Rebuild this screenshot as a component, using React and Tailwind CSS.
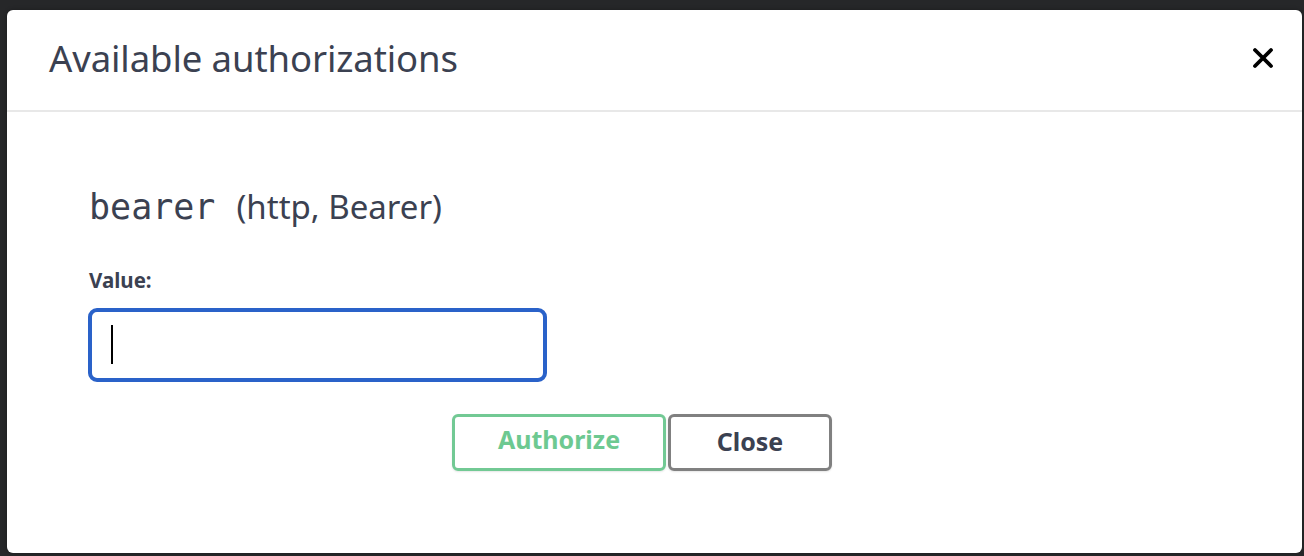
import React from "react";

export default function App() {
  return (
    <div className="w-[1304px] h-[556px] bg-[#262729] pl-[7px] pr-[2px] pt-[10px] pb-[3px] overflow-hidden" style={{ fontFamily: '"Noto Sans", "Open Sans", sans-serif' }}>
      <div className="h-full bg-white rounded-[6px] shadow-[0_0_4px_rgba(0,0,0,0.3)] flex flex-col">
        <div className="h-[102px] border-b-2 border-[#e8e8e8] flex items-center justify-between pl-[42px] pr-[27px] shrink-0">
          <h3 className="text-[36.5px] leading-none text-[#3b4151] font-normal tracking-[-0.1px] mt-[-4px]">Available authorizations</h3>
          <button className="w-[24px] h-[24px] flex items-center justify-center mt-[-4px]">
            <svg width="22" height="22" viewBox="0 0 22 22">
              <path d="M3 3 L19 19 M19 3 L3 19" stroke="#000" strokeWidth="3.8" strokeLinecap="round" />
            </svg>
          </button>
        </div>
        <div className="pl-[81px] pt-[78px]">
          <h4 className="flex items-baseline text-[#3b4151] leading-none pl-[1px]">
            <code className="text-[35px]" style={{ fontFamily: '"DejaVu Sans Mono", monospace' }}>bearer</code>
            <span className="text-[33px] ml-[21px]">(http, Bearer)</span>
          </h4>
          <div className="mt-[45px] pl-[1px] text-[20.5px] font-bold text-[#3b4151] leading-none">Value:</div>
          <div className="mt-[17px] w-[459px] h-[74px] border-[4px] border-[#2a62c9] rounded-[9px] flex items-center pl-[19px]">
            <div className="w-[2px] h-[39px] bg-black"></div>
          </div>
          <div className="flex mt-[32px] ml-[364px]">
            <button className="w-[214px] h-[57px] border-[3px] border-[#72c994] rounded-[6px] text-[25px] font-bold text-[#6dc991] shadow-[0_1px_2px_rgba(0,0,0,0.1)] pb-[4px]">Authorize</button>
            <button className="ml-[2px] w-[164px] h-[57px] border-[3px] border-[#808080] rounded-[6px] text-[25px] font-bold text-[#3b4151] shadow-[0_1px_2px_rgba(0,0,0,0.1)]">Close</button>
          </div>
        </div>
      </div>
    </div>
  );
}
